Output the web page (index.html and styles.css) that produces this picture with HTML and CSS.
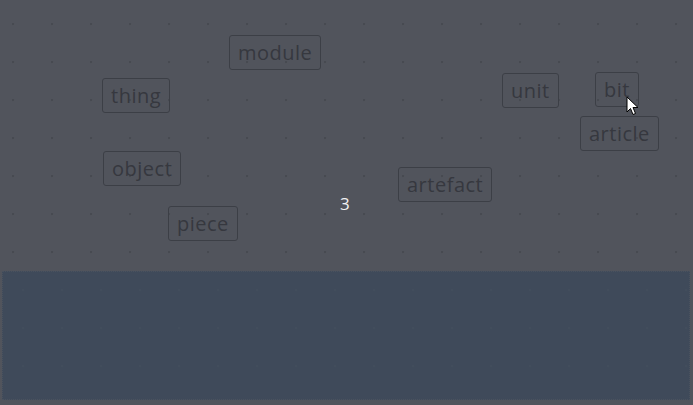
FILE: index.html
```html
<!DOCTYPE html>
<html>
<head>
<meta charset="utf-8">
<link rel="stylesheet" href="styles.css">
</head>
<body>
<div class="page">
  <div class="board">
    <span class="chip" style="left:229px;top:35px;">module</span>
    <span class="chip" style="left:102px;top:78px;">thing</span>
    <span class="chip" style="left:502px;top:73px;">unit</span>
    <span class="chip" style="left:595px;top:72px;">bit</span>
    <span class="chip" style="left:580px;top:116px;">article</span>
    <span class="chip" style="left:103px;top:151px;">object</span>
    <span class="chip" style="left:168px;top:206px;">piece</span>
    <span class="chip" style="left:398px;top:167px;">artefact</span>
    <span class="count">3</span>
    <svg class="cursor" width="14" height="21" viewBox="0 0 14 21">
      <path d="M1 1 L1 16 L4.5 12.5 L7 18.5 L9.5 17.5 L7 11.5 L12 11.5 Z" fill="#ffffff" stroke="#000000" stroke-width="1" stroke-linejoin="round"/>
    </svg>
  </div>
  <div class="tray"></div>
</div>
</body>
</html>
```

FILE: styles.css
```css
html, body {
  margin: 0;
  padding: 0;
  background: #51545c;
}
.page {
  width: 693px;
  height: 405px;
  display: flex;
  flex-direction: column;
  background: #51545c;
}
.board {
  position: relative;
  height: 271px;
  flex: none;
  background-color: #51545c;
  background-image: radial-gradient(circle at 1px 1px, #474a51 1.1px, rgba(71,74,81,0) 1.6px);
  background-size: 39px 38px;
  background-position: 12px 23px;
}
.chip {
  position: absolute;
  box-sizing: border-box;
  height: 35px;
  padding: 0 8px;
  display: flex;
  align-items: center;
  border: 1px solid #3c3f46;
  border-radius: 3px;
  font-family: "Open Sans", "Liberation Sans", sans-serif;
  font-size: 20px;
  color: #36383f;
  line-height: 1;
  letter-spacing: 0.5px;
}
.count {
  position: absolute;
  left: 340px;
  top: 192px;
  font-family: "Open Sans", "Liberation Sans", sans-serif;
  font-size: 17px;
  color: #f2f2f2;
}
.cursor {
  position: absolute;
  left: 626px;
  top: 96px;
}
.tray {
  flex: none;
  height: 129px;
  margin: 0 3px 0 2px;
  box-sizing: border-box;
  border: 1px dotted #4a525e;
  background-color: #3f4a5a;
  background-image: radial-gradient(circle at 1px 1px, #424d5c 1px, rgba(66,77,92,0) 1.6px);
  background-size: 39px 38px;
  background-position: 19px 17px;
}
```
